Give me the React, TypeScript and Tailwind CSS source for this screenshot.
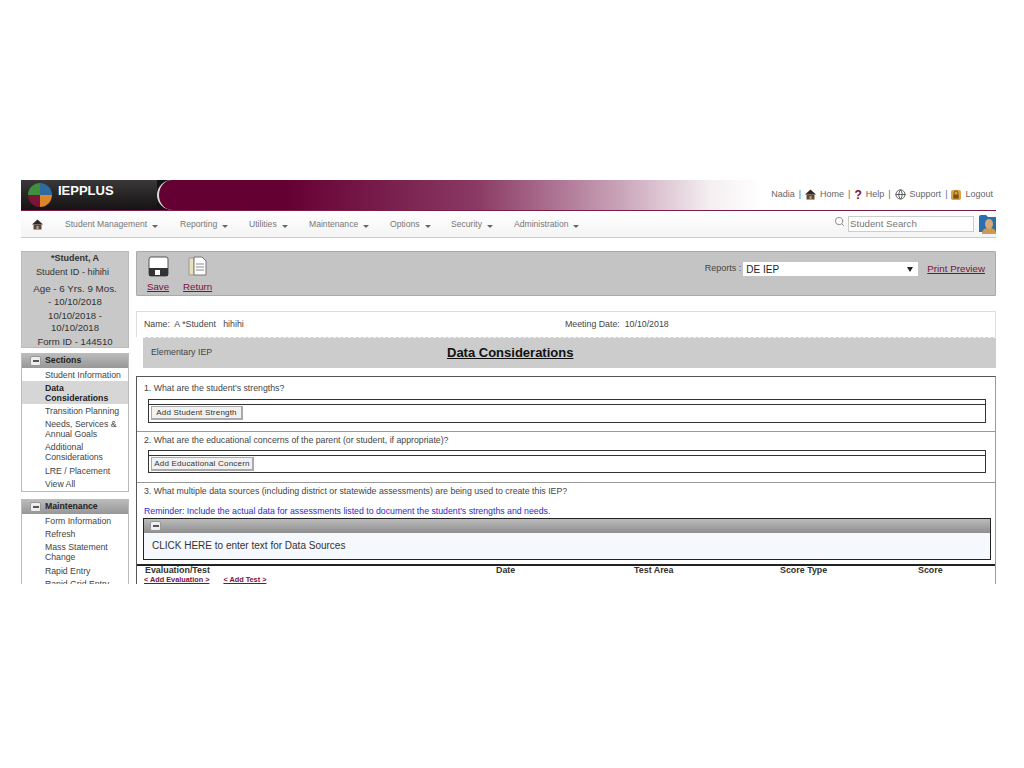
import React from "react";
import { Globe, Search } from "lucide-react";

const font = { fontFamily: '"Liberation Sans", Arial, sans-serif' };

const navItems = [
  ["Student Management", "w-[115px]"],
  ["Reporting", "w-[69px]"],
  ["Utilities", "w-[60px]"],
  ["Maintenance", "w-[81px]"],
  ["Options", "w-[61px]"],
  ["Security", "w-[63px]"],
  ["Administration", "w-[90px]"],
];

const Caret = () => (
  <span className="ml-[5px] inline-block align-[-1px] border-x-[3px] border-t-[3px] border-x-transparent border-t-[#666]" />
);

const Minus = () => (
  <span className="flex h-[10px] w-[11px] items-center justify-center rounded-[2px] border border-[#999] bg-[#eee]">
    <span className="h-[2px] w-[6px] bg-[#555]" />
  </span>
);

const HomeIcon = () => (
  <svg width="11" height="11" viewBox="0 0 11 11">
    <path d="M5.5 0.5L0 5.5h11z" fill="#2e2a28" />
    <rect x="1.5" y="5.5" width="8" height="5" fill="#5a4a40" />
    <rect x="4.5" y="7" width="2" height="3.5" fill="#c9a070" />
  </svg>
);

const LockIcon = () => (
  <svg width="10" height="11" viewBox="0 0 11 12">
    <rect x="0" y="1" width="11" height="11" rx="2" fill="#d9a441" />
    <path d="M3.5 6V4a2 2 0 0 1 4 0v2" fill="none" stroke="#6b4a10" />
    <rect x="2.5" y="6" width="6" height="4.5" fill="#7a5210" />
  </svg>
);

const SideHeader = ({ title }: { title: string }) => (
  <div className="flex h-[15px] items-center gap-[4px] bg-gradient-to-b from-[#bdbdbd] to-[#979797] pl-[8px] text-[8.7px] font-bold text-[#222]">
    <Minus />
    <span>{title}</span>
  </div>
);

const SideLink = ({ children, active, extra }: { children: React.ReactNode; active?: boolean; extra?: string }) => (
  <div className={`py-[1.5px] pl-[23px] text-[8.7px] leading-[10px] ${active ? "bg-[#d6d6d6] font-bold text-[#222]" : "text-[#444]"} ${extra ?? ""}`}>
    {children}
  </div>
);

const AddBox = ({ label, width, box }: { label: string; width: string; box: string }) => (
  <div className={`ml-[11px] mr-[9px] border border-[#333] pt-[4px] ${box}`}>
    <div className="border-t border-[#333] pl-[2px] pt-[1px]">
      <button className={`${width} flex h-[14px] items-center justify-center border border-b-2 border-r-2 border-[#aaa] bg-[#f1f1f1] text-[8px] tracking-[0.2px] text-[#333]`}>
        {label}
      </button>
    </div>
  </div>
);

export default function App() {
  return (
    <div className="h-[768px] w-[1024px] overflow-hidden bg-white pt-[180px] pl-[21px]" style={font}>
      <div className="flex h-[404px] w-[975px] flex-col overflow-hidden">
        {/* top banner */}
        <div className="relative flex h-[31px] shrink-0 border-b border-[#7a1c48]">
          <div className="flex w-[136px] items-center bg-gradient-to-b from-[#3a3838] to-[#141212] pl-[7px]">
            <svg width="24" height="24" viewBox="0 0 24 24">
              <path d="M12 12V0A12 12 0 0 0 0 12z" fill="#3f8f3c" />
              <path d="M12 12V0A12 12 0 0 1 24 12z" fill="#2d6a9f" />
              <path d="M12 12H24A12 12 0 0 1 12 24z" fill="#d9862a" />
              <path d="M12 12V24A12 12 0 0 1 0 12z" fill="#7c1437" />
            </svg>
            <span className="ml-[6px] -mt-[8px] text-[13px] font-bold text-white">IEPPLUS</span>
          </div>
          <div className="flex-1 bg-[#141212]">
            <div className="h-full rounded-l-[24px] border-l-2 border-[#ddd] bg-[linear-gradient(90deg,#650032_0%,#650032_15%,#8a3a64_38%,#c9a3b8_55%,#f5f0f2_66%,#ffffff_72%)]" />
          </div>
          <div className="absolute right-[3px] top-[8px] flex items-center gap-[4px] text-[9px] text-[#666]">
            <span>Nadia</span>
            <span>|</span>
            <HomeIcon />
            <span>Home</span>
            <span>|</span>
            <span className="text-[12px] leading-[10px] font-bold text-[#7a1030]">?</span>
            <span>Help</span>
            <span>|</span>
            <Globe size={11} stroke="#555" />
            <span>Support</span>
            <span>|</span>
            <LockIcon />
            <span>Logout</span>
          </div>
        </div>

        {/* nav */}
        <div className="flex h-[27px] shrink-0 items-center border-b border-[#ccc] bg-gradient-to-b from-white to-[#f4f4f4] pt-[1px] text-[8.6px] text-[#777]">
          <span className="ml-[11px] mr-[22px] flex w-[11px] justify-center">
            <HomeIcon />
          </span>
          {navItems.map(([label, w]) => (
            <span key={label} className={`${w} whitespace-nowrap`}>
              {label}
              <Caret />
            </span>
          ))}
          <span className="-mt-[1px] ml-auto flex items-center">
            <Search size={11} stroke="#888" className="-mt-[5px] mr-[3px]" />
            <span className="mr-[5px] flex h-[16px] w-[126px] items-center border border-[#ccc] bg-white pl-[1px] text-[9.7px] text-[#777]">
              Student Search
            </span>
            <svg width="17" height="20" viewBox="0 0 17 20">
              <path d="M0 3a2 2 0 0 1 2-2h5l2 2h8v15H0z" fill="#2a6fb0" />
              <path d="M3 20c0-5 3-6 7-6s7 1 7 6z" fill="#c99a50" />
              <ellipse cx="10" cy="10" rx="4" ry="5" fill="#d8a878" />
            </svg>
          </span>
        </div>

        <div className="mt-[13px] flex min-h-0 flex-1 gap-[7px]">
          {/* sidebar */}
          <div className="flex w-[108px] shrink-0 flex-col">
            <div className="h-[97px] shrink-0 border border-[#bbb] bg-[#c8c8c8] text-center text-[9.6px] leading-[12px] text-[#333]">
              <div className="text-[9px] font-bold">*Student, A</div>
              <div className="mt-[2px] pr-[5px] text-[9.2px]">Student ID - hihihi</div>
              <div className="mt-[5px] text-[9.8px]">Age - 6 Yrs. 9 Mos.</div>
              <div className="mt-[1px]">- 10/10/2018</div>
              <div className="mt-[2px]">10/10/2018 -</div>
              <div>10/10/2018</div>
              <div className="mt-[2px]">Form ID - 144510</div>
            </div>
            <div className="mt-[5px] h-[139px] shrink-0 border border-t-0 border-[#bbb]">
              <SideHeader title="Sections" />
              <SideLink>Student Information</SideLink>
              <SideLink active>
                Data
                <br />
                Considerations
              </SideLink>
              <SideLink>Transition Planning</SideLink>
              <SideLink>
                Needs, Services &amp;
                <br />
                Annual Goals
              </SideLink>
              <SideLink extra="mb-[1px]">
                Additional
                <br />
                Considerations
              </SideLink>
              <SideLink>LRE / Placement</SideLink>
              <SideLink>View All</SideLink>
            </div>
            <div className="mt-[7px] border-x border-[#bbb]">
              <SideHeader title="Maintenance" />
              <SideLink>Form Information</SideLink>
              <SideLink>Refresh</SideLink>
              <SideLink extra="mb-[1px]">
                Mass Statement
                <br />
                Change
              </SideLink>
              <SideLink>Rapid Entry</SideLink>
              <SideLink>Rapid Grid Entry</SideLink>
            </div>
          </div>

          {/* main column */}
          <div className="flex min-w-0 flex-1 flex-col">
            <div className="flex h-[45px] shrink-0 justify-between rounded-[1px] border border-[#aaa] bg-[#c4c4c4] pl-[10px] pr-[10px] pt-[4px]">
              <div className="flex gap-[14px] text-[9.7px] text-[#7a1040] underline">
                <div className="flex flex-col items-center">
                  <svg width="21" height="21" viewBox="0 0 21 21">
                    <rect x="1" y="1" width="19" height="19" rx="2" fill="#fff" stroke="#555" />
                    <rect x="1" y="12" width="19" height="8" fill="#333" />
                    <rect x="7" y="14" width="5" height="5" fill="#fff" />
                  </svg>
                  <span className="mt-[3px]">Save</span>
                </div>
                <div className="flex flex-col items-center">
                  <svg width="21" height="21" viewBox="0 0 21 21">
                    <path d="M2 2h5v17H2z" fill="#e8e0b8" stroke="#999" />
                    <path d="M7 1h8l4 4v14H7z" fill="#fff" stroke="#777" />
                    <path d="M9 8h8M9 11h8M9 14h8" stroke="#888" />
                  </svg>
                  <span className="mt-[3px]">Return</span>
                </div>
              </div>
              <div className="mt-[6px] flex h-[14px] items-center text-[9px] text-[#444]">
                <span className="mr-[2px]">Reports :</span>
                <span className="flex h-[14px] w-[175px] items-center justify-between bg-white pl-[3px] pr-[5px] text-[10px] text-[#222]">
                  DE IEP
                  <span className="border-x-[3px] border-t-[5px] border-x-transparent border-t-[#222]" />
                </span>
                <span className="ml-[9px] text-[9.8px] text-[#7a1040] underline">Print Preview</span>
              </div>
            </div>

            <div className="mt-[15px] flex h-[26px] shrink-0 items-center rounded-t-[1px] border border-b-0 border-[#ddd] bg-white pl-[7px] text-[8.8px] text-[#444]">
              <span className="w-[421px] whitespace-pre">Name:  A *Student   hihihi</span>
              <span className="whitespace-pre">Meeting Date:  10/10/2018</span>
            </div>

            <div className="relative ml-[7px] flex h-[31px] shrink-0 items-center border-t border-dashed border-[#eee] bg-[#cccccc] pl-[8px] text-[8.8px] text-[#444]">
              <span>Elementary IEP</span>
              <span className="absolute left-[304px] text-[13px] font-bold text-[#111] underline">Data Considerations</span>
            </div>

            <div className="mt-[8px] min-h-0 flex-1 overflow-hidden border border-b-0 border-[#555] border-r-[#999] text-[8.75px] text-[#444]">
              <div className="h-[55px] border-b border-[#999] pt-[6px]">
                <div className="pl-[7px] leading-[11px]">1. What are the student's strengths?</div>
                <AddBox label="Add Student Strength" width="w-[92px]" box="mt-[5px] h-[24px]" />
              </div>
              <div className="h-[51px] border-b border-[#999] pt-[3px]">
                <div className="pl-[7px] leading-[11px]">2. What are the educational concerns of the parent (or student, if appropriate)?</div>
                <AddBox label="Add Educational Concern" width="w-[103px]" box="mt-[4px] h-[23px]" />
              </div>
              <div className="pt-[3px]">
                <div className="pl-[7px] leading-[11px]">3. What multiple data sources (including district or statewide assessments) are being used to create this IEP?</div>
                <div className="mt-[9px] pl-[7px] leading-[11px] text-[#2a2ad0]">Reminder: Include the actual data for assessments listed to document the student's strengths and needs.</div>
                <div className="ml-[6px] mr-[4px] mt-[1px] h-[42px] border border-[#222]">
                  <div className="flex h-[14px] items-center bg-gradient-to-b from-[#bcbcbc] to-[#8e8e8e] pl-[6px]">
                    <Minus />
                  </div>
                  <div className="flex h-[26px] items-center bg-[#f5f8fc] pb-[1px] pl-[8px] text-[10px] text-[#333]">
                    CLICK HERE to enter text for Data Sources
                  </div>
                </div>
                <div className="mt-[4px] h-[21px] border-t-2 border-b border-[#222] border-b-[#888]">
                  <div className="relative h-[9px] pl-[8px] text-[8.9px] leading-[9px] font-bold text-[#333]">
                    Evaluation/Test
                    <span className="absolute left-[359px]">Date</span>
                    <span className="absolute left-[497px]">Test Area</span>
                    <span className="absolute left-[643px]">Score Type</span>
                    <span className="absolute left-[781px]">Score</span>
                  </div>
                  <div className="mt-[1px] flex gap-[14px] pl-[7px] text-[7.3px] leading-[8px] font-bold text-[#7a1040] underline">
                    <span>&lt; Add Evaluation &gt;</span>
                    <span>&lt; Add Test &gt;</span>
                  </div>
                </div>
              </div>
            </div>
          </div>
        </div>
      </div>
    </div>
  );
}
